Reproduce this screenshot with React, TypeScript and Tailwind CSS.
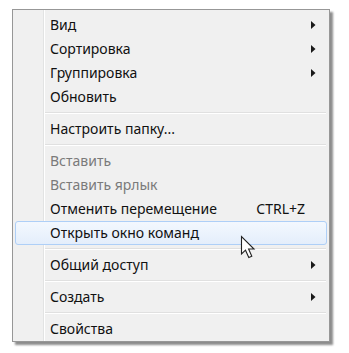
import React from "react";

type Item =
  | { type: "sep" }
  | { type: "item"; label: string; sub?: boolean; disabled?: boolean; shortcut?: string; hover?: boolean };

const items: Item[] = [
  { type: "item", label: "Вид", sub: true },
  { type: "item", label: "Сортировка", sub: true },
  { type: "item", label: "Группировка", sub: true },
  { type: "item", label: "Обновить" },
  { type: "sep" },
  { type: "item", label: "Настроить папку..." },
  { type: "sep" },
  { type: "item", label: "Вставить", disabled: true },
  { type: "item", label: "Вставить ярлык", disabled: true },
  { type: "item", label: "Отменить перемещение", shortcut: "CTRL+Z" },
  { type: "item", label: "Открыть окно команд", hover: true },
  { type: "sep" },
  { type: "item", label: "Общий доступ", sub: true },
  { type: "sep" },
  { type: "item", label: "Создать", sub: true },
  { type: "sep" },
  { type: "item", label: "Свойства" },
];

function Arrow() {
  return (
    <svg width="5" height="8" viewBox="0 0 5 8" className="block">
      <path d="M0 0 L4.5 4 L0 8 Z" fill="#1a1a1a" />
    </svg>
  );
}

function Cursor() {
  return (
    <svg width="20" height="26" viewBox="0 0 20 26" className="absolute left-[240px] top-[235px]">
      <path
        d="M1.5 1.5 L1.5 19 L5.5 15.2 L8.8 22.5 L11.8 21.2 L8.6 14 L14 14 Z"
        fill="#ffffff"
        stroke="#222"
        strokeWidth="1.1"
        strokeLinejoin="miter"
      />
    </svg>
  );
}

export default function App() {
  return (
    <div className="w-[349px] h-[353px] bg-white relative font-['Noto_Sans',sans-serif]">
      <div className="pt-[9px] pl-[12px]">
        <div className="w-[318px] border border-[#979797] shadow-[3px_3px_2px_rgba(0,0,0,0.45)] bg-[linear-gradient(to_right,#f0f0f0_30px,#e2e3e3_30px,#e2e3e3_31px,#ffffff_31px,#ffffff_32px,#f0f0f0_32px)] px-[2px] pt-[3px] pb-0">
          {items.map((it, i) =>
            it.type === "sep" ? (
              <div key={i} className="h-[8px] flex items-center pl-[30px] pr-[1px]">
                <div className="w-full h-[2px] border-t border-[#e0e0e0] border-b border-b-white" />
              </div>
            ) : (
              <div
                key={i}
                className={
                  "h-[24px] flex items-center pr-[10px] pl-[34px] text-[14px] leading-none border rounded-[3px] " +
                  (it.hover
                    ? "border-[#aecff7] bg-[linear-gradient(to_bottom,#f3f8fe,#e4eefb)]"
                    : "border-transparent") +
                  (it.disabled ? " text-[#7a7a7a]" : " text-[#111]")
                }
              >
                <span className="flex-1">{it.label}</span>
                {it.shortcut && <span className="mr-[11px]">{it.shortcut}</span>}
                {it.sub && <Arrow />}
              </div>
            )
          )}
        </div>
      </div>
      <Cursor />
    </div>
  );
}
